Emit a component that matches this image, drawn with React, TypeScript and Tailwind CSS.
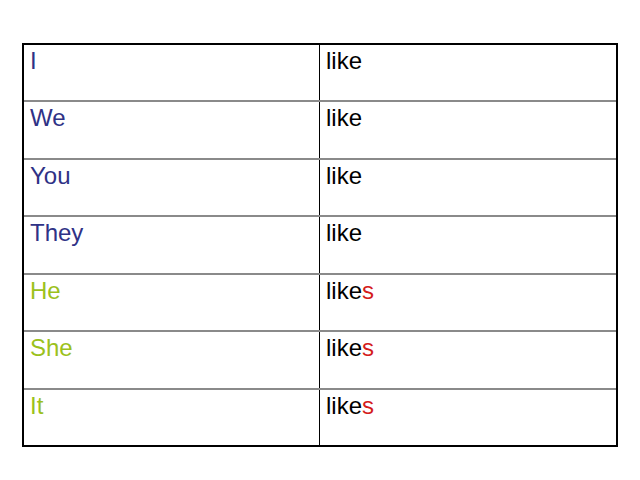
import React from 'react';

const rows = [
  { who: 'I', tone: 'blue', s: false },
  { who: 'We', tone: 'blue', s: false },
  { who: 'You', tone: 'blue', s: false },
  { who: 'They', tone: 'blue', s: false },
  { who: 'He', tone: 'green', s: true },
  { who: 'She', tone: 'green', s: true },
  { who: 'It', tone: 'green', s: true },
];

const App: React.FC = () => {
  return (
    <div className="w-[640px] h-[480px] bg-white pt-[43px] pl-[22px] font-['Liberation_Sans',Arial,sans-serif]">
      <div className="w-[596px] h-[404px] border-2 border-black flex flex-col">
        {rows.map((r, i) => (
          <div
            key={i}
            className={`flex-1 grid grid-cols-[296px_1fr] ${i < rows.length - 1 ? 'border-b-2 border-[#8a8a8a]' : ''}`}
          >
            <div
              className={`border-r border-black pl-[6px] pt-[4px] text-[24px] leading-none ${
                r.tone === 'blue' ? 'text-[#2f3286]' : 'text-[#9bc11c]'
              }`}
            >
              {r.who}
            </div>
            <div className="pl-[6px] pt-[4px] text-[24px] leading-none text-black">
              like{r.s && <span className="text-[#d41c1c]">s</span>}
            </div>
          </div>
        ))}
      </div>
    </div>
  );
};

export default App;
